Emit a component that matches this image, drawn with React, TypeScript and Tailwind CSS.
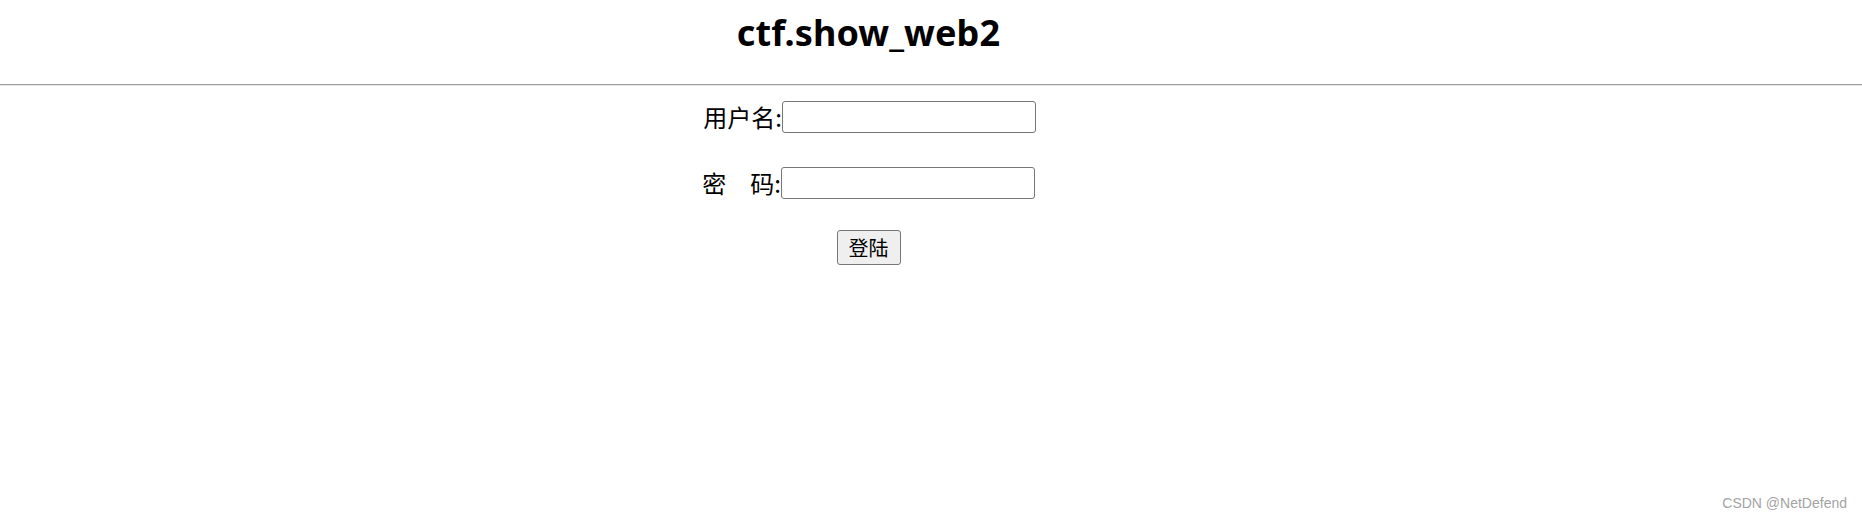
import React from "react";

export default function App() {
  const cjk = { fontFamily: '"Noto Sans CJK SC", "Noto Sans", sans-serif' };
  return (
    <div className="relative w-[1862px] h-[519px] bg-white overflow-hidden text-black">
      <div className="w-[1737px] h-[84px] flex justify-center items-start pt-[9px]">
        <h1
          className="text-[36px] font-bold leading-[48px] tracking-[0.1px]"
          style={{ fontFamily: '"Noto Sans", "Open Sans", sans-serif' }}
        >
          ctf.show_web2
        </h1>
      </div>
      <div className="w-full h-[2px] border-t border-[#a0a0a0] bg-[#e6e6e6]" />
      <form className="w-[1737px] flex flex-col items-center pt-[15px]" style={cjk} onSubmit={(e) => e.preventDefault()}>
        <div className="flex items-center h-[32px]">
          <span className="text-[24px] leading-[32px] pl-[2px]">用户名:</span>
          <input
            type="text"
            className="w-[254px] h-[32px] border border-[#767676] rounded-[3px] bg-white outline-none"
          />
        </div>
        <div className="flex items-center h-[32px] mt-[34px]">
          <span className="text-[24px] leading-[32px] whitespace-pre">密　码:</span>
          <input
            type="password"
            className="w-[254px] h-[32px] border border-[#767676] rounded-[3px] bg-white outline-none"
          />
        </div>
        <button
          type="submit"
          className="mt-[31px] w-[64px] h-[35px] border border-[#767676] rounded-[3px] bg-[#efefef] text-[20px] leading-[20px]"
          style={cjk}
        >
          登陆
        </button>
      </form>
      <div
        className="absolute right-[15px] bottom-[5px] text-[14px] text-[#a3a3a3]"
        style={{ fontFamily: '"Liberation Sans", Arial, sans-serif' }}
      >
        CSDN @NetDefend
      </div>
    </div>
  );
}
